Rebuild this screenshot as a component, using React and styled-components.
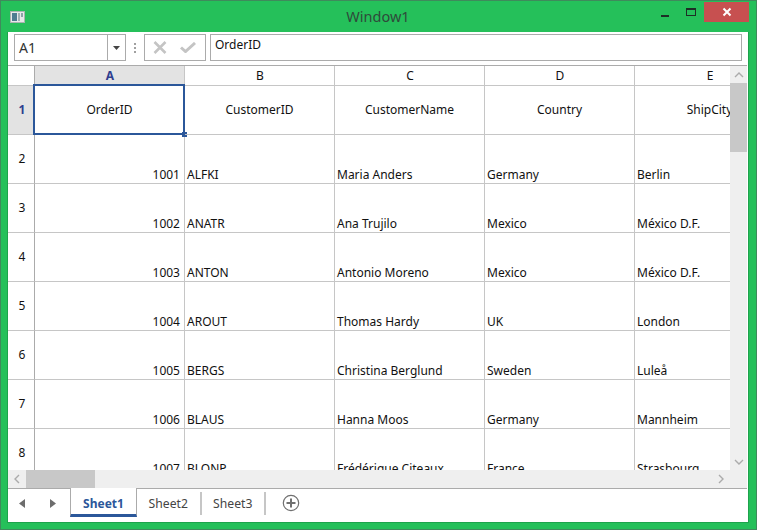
import React from 'react'
import styled, { createGlobalStyle } from 'styled-components'

const GlobalStyle = createGlobalStyle`
    html, body { margin: 0; padding: 0; background: #25c05a; }
    * { box-sizing: border-box; }
`

const columns = ['A', 'B', 'C', 'D', 'E']

const headerRow = ['OrderID', 'CustomerID', 'CustomerName', 'Country', 'ShipCity']

const rows = [
    ['1001', 'ALFKI', 'Maria Anders', 'Germany', 'Berlin'],
    ['1002', 'ANATR', 'Ana Trujilo', 'Mexico', 'México D.F.'],
    ['1003', 'ANTON', 'Antonio Moreno', 'Mexico', 'México D.F.'],
    ['1004', 'AROUT', 'Thomas Hardy', 'UK', 'London'],
    ['1005', 'BERGS', 'Christina Berglund', 'Sweden', 'Luleå'],
    ['1006', 'BLAUS', 'Hanna Moos', 'Germany', 'Mannheim'],
    ['1007', 'BLONP', 'Frédérique Citeaux', 'France', 'Strasbourg'],
]

const App = () => {
    return (
        <Window>
            <GlobalStyle />
            <TitleBar>
                <AppIcon>
                    <svg width="15" height="12" viewBox="0 0 15 12">
                        <rect x="0.5" y="0.5" width="14" height="11" fill="#e6e9e9" stroke="#a9b4b0" />
                        <rect x="2" y="2" width="5" height="8" fill="#4d7d90" />
                        <rect x="8" y="2" width="2" height="8" fill="#9fb2b4" />
                        <rect x="11" y="2" width="2" height="4" fill="#8ca3a6" />
                    </svg>
                </AppIcon>
                <Title>Window1</Title>
                <WindowButtons>
                    <MinButton><span /></MinButton>
                    <MaxButton><span /></MaxButton>
                    <CloseButton>
                        <svg width="10" height="10" viewBox="0 0 10 10">
                            <path d="M1.5 1.5L8.5 8.5M8.5 1.5L1.5 8.5" stroke="#fff" strokeWidth="2" />
                        </svg>
                    </CloseButton>
                </WindowButtons>
            </TitleBar>
            <Content>
                <FormulaBar>
                    <NameBox>
                        <NameText>A1</NameText>
                        <NameArrow>
                            <svg width="7" height="4" viewBox="0 0 7 4"><path d="M0 0H7L3.5 4Z" fill="#444" /></svg>
                        </NameArrow>
                    </NameBox>
                    <Grip>
                        <i /><i /><i />
                    </Grip>
                    <ActionBox>
                        <svg width="14" height="13" viewBox="0 0 14 13">
                            <path d="M1.5 1L12.5 12M12.5 1L1.5 12" stroke="#c4c4c4" strokeWidth="2.6" />
                        </svg>
                        <svg width="16" height="11" viewBox="0 0 16 11">
                            <path d="M1 5.5L5.5 9.5L15 1" fill="none" stroke="#c4c4c4" strokeWidth="3" />
                        </svg>
                    </ActionBox>
                    <FormulaInput>OrderID</FormulaInput>
                </FormulaBar>
                <SheetArea>
                    <GridView>
                        <HeaderLine>
                            <Corner />
                            {columns.map((col, i) => (
                                <ColumnHeader key={col} $active={i === 0}>{col}</ColumnHeader>
                            ))}
                        </HeaderLine>
                        <TitleLine>
                            <RowHeader $active>1</RowHeader>
                            {headerRow.map((text, i) => (
                                <TitleCell key={text} $selected={i === 0}>{text}</TitleCell>
                            ))}
                        </TitleLine>
                        {rows.map((row, r) => (
                            <DataLine key={row[0]}>
                                <RowHeader>{r + 2}</RowHeader>
                                {row.map((text, i) => (
                                    <DataCell key={i} $number={i === 0}>{text}</DataCell>
                                ))}
                            </DataLine>
                        ))}
                    </GridView>
                    <VerticalBar>
                        <BarArrow>
                            <svg width="10" height="6" viewBox="0 0 10 6"><path d="M1 5L5 1L9 5" fill="none" stroke="#ababab" strokeWidth="1.4" /></svg>
                        </BarArrow>
                        <VerticalThumb />
                        <BarSpacer />
                        <BarArrow>
                            <svg width="10" height="6" viewBox="0 0 10 6"><path d="M1 1L5 5L9 1" fill="none" stroke="#ababab" strokeWidth="1.4" /></svg>
                        </BarArrow>
                    </VerticalBar>
                    <HorizontalBar>
                        <BarArrowH>
                            <svg width="6" height="10" viewBox="0 0 6 10"><path d="M5 1L1 5L5 9" fill="none" stroke="#ababab" strokeWidth="1.4" /></svg>
                        </BarArrowH>
                        <HorizontalThumb />
                        <BarSpacer />
                        <BarArrowH>
                            <svg width="6" height="10" viewBox="0 0 6 10"><path d="M1 1L5 5L1 9" fill="none" stroke="#ababab" strokeWidth="1.4" /></svg>
                        </BarArrowH>
                    </HorizontalBar>
                    <BarCorner />
                </SheetArea>
                <TabBar>
                    <TabNav>
                        <svg width="6" height="9" viewBox="0 0 6 9"><path d="M6 0V9L0 4.5Z" fill="#6d6d6d" /></svg>
                        <svg width="6" height="9" viewBox="0 0 6 9"><path d="M0 0V9L6 4.5Z" fill="#6d6d6d" /></svg>
                    </TabNav>
                    <ActiveTab>Sheet1</ActiveTab>
                    <Tab>Sheet2</Tab>
                    <Tab>Sheet3</Tab>
                    <AddSheet>
                        <svg width="18" height="18" viewBox="0 0 18 18">
                            <circle cx="9" cy="9" r="7.7" fill="none" stroke="#707070" strokeWidth="1.2" />
                            <path d="M9 4.5V13.5M4.5 9H13.5" stroke="#707070" strokeWidth="2" />
                        </svg>
                    </AddSheet>
                </TabBar>
            </Content>
        </Window>
    )
}

const Window = styled.div`
    width: 757px;
    height: 530px;
    background-color: #25c05a;
    border: 1px solid #3f8a5c;
    padding: 0 7px 6px 6px;
    display: flex;
    flex-direction: column;
    font-family: "Noto Sans", "Open Sans", sans-serif;
    overflow: hidden;
`
const TitleBar = styled.div`
    height: 31px;
    flex: none;
    display: flex;
    align-items: flex-start;
    position: relative;
`
const AppIcon = styled.div`
    margin: 10px 0 0 3px;
    line-height: 0;
`
const Title = styled.div`
    position: absolute;
    left: 0;
    right: 0;
    top: 5px;
    text-align: center;
    font-size: 14.5px;
    line-height: 20px;
    color: #2f4a3a;
`
const WindowButtons = styled.div`
    margin-left: auto;
    display: flex;
    position: relative;
`
const MinButton = styled.div`
    width: 27px;
    height: 21px;
    display: flex;
    justify-content: center;
    span {
        display: block;
        width: 8px;
        height: 2px;
        margin-top: 14px;
        background-color: #1d2f26;
    }
`
const MaxButton = styled.div`
    width: 26px;
    height: 21px;
    display: flex;
    justify-content: center;
    span {
        display: block;
        width: 10px;
        height: 8px;
        margin-top: 7px;
        border: 1px solid #1d2f26;
        border-top-width: 2px;
    }
`
const CloseButton = styled.div`
    width: 45px;
    height: 20px;
    margin-top: 1px;
    background-color: #c75050;
    display: flex;
    align-items: center;
    justify-content: center;
`
const Content = styled.div`
    flex: 1;
    min-height: 0;
    background-color: #fff;
    border: 1px solid #1ea34c;
    border-top: 0;
    display: flex;
    flex-direction: column;
`
const FormulaBar = styled.div`
    height: 33px;
    flex: none;
    padding: 2px 6px 4px 6px;
    display: flex;
    align-items: stretch;
`
const NameBox = styled.div`
    width: 112px;
    border: 1px solid #ababab;
    display: flex;
`
const NameText = styled.div`
    flex: 1;
    padding-left: 4px;
    font-size: 14px;
    line-height: 25px;
    color: #333;
`
const NameArrow = styled.div`
    width: 18px;
    border-left: 1px solid #ababab;
    display: flex;
    align-items: center;
    justify-content: center;
`
const Grip = styled.div`
    width: 18px;
    display: flex;
    flex-direction: column;
    align-items: center;
    justify-content: center;
    gap: 2px;
    i {
        display: block;
        width: 2px;
        height: 2px;
        background-color: #a0a0a0;
    }
`
const ActionBox = styled.div`
    width: 62px;
    border: 1px solid #ababab;
    display: flex;
    align-items: center;
    justify-content: center;
    gap: 13px;
    padding-right: 1px;
`
const FormulaInput = styled.div`
    flex: 1;
    margin-left: 4px;
    border: 1px solid #ababab;
    padding-left: 4px;
    font-size: 12px;
    line-height: 20px;
    color: #111;
`
const SheetArea = styled.div`
    flex: 1;
    min-height: 0;
    margin-right: 1px;
    border-top: 1px solid #ababab;
    border-bottom: 1px solid #ababab;
    display: grid;
    grid-template-columns: 1fr 17px;
    grid-template-rows: 1fr 18px;
`
const GridView = styled.div`
    overflow: hidden;
    min-width: 0;
    min-height: 0;
`
const Line = styled.div`
    display: grid;
    grid-template-columns: 27px repeat(5, 150px);
    width: 777px;
`
const HeaderLine = styled(Line)`
    height: 20px;
`
const TitleLine = styled(Line)`
    height: 49px;
`
const DataLine = styled(Line)`
    height: 49px;
`
const Corner = styled.div`
    border-right: 1px solid #ababab;
    border-bottom: 1px solid #c6c6c6;
`
const ColumnHeader = styled.div`
    background-color: ${props => props.$active ? '#e3e3e3' : '#fff'};
    color: ${props => props.$active ? '#2f3e8f' : '#111'};
    font-weight: ${props => props.$active ? 700 : 400};
    border-right: 1px solid #c6c6c6;
    border-bottom: 1px solid ${props => props.$active ? '#2b579a' : '#c6c6c6'};
    padding-left: 1px;
    text-align: center;
    font-size: 12px;
    line-height: 19px;
`
const RowHeader = styled.div`
    background-color: ${props => props.$active ? '#e3e3e3' : '#fff'};
    color: ${props => props.$active ? '#2f3e8f' : '#111'};
    font-weight: ${props => props.$active ? 700 : 400};
    border-right: 1px solid #ababab;
    border-bottom: 1px solid #c6c6c6;
    display: flex;
    align-items: center;
    justify-content: center;
    padding: 0 0 2px 2px;
    font-size: 12px;
`
const TitleCell = styled.div`
    position: relative;
    border-right: 1px solid #c6c6c6;
    border-bottom: 1px solid #c6c6c6;
    display: flex;
    align-items: center;
    justify-content: center;
    padding-bottom: 2px;
    font-size: 12px;
    color: #111;
    white-space: nowrap;
    ${props => props.$selected && `
        &::before {
            content: "";
            position: absolute;
            inset: -2px -1px -1px -2px;
            border: 2px solid #2b579a;
        }
        &::after {
            content: "";
            position: absolute;
            right: -3px;
            bottom: -3px;
            width: 5px;
            height: 5px;
            background-color: #2b579a;
        }
    `}
`
const DataCell = styled.div`
    border-right: 1px solid #c6c6c6;
    border-bottom: 1px solid #c6c6c6;
    display: flex;
    align-items: flex-end;
    justify-content: ${props => props.$number ? 'flex-end' : 'flex-start'};
    padding: 0 4px 0 2px;
    font-size: 12px;
    line-height: 17px;
    color: #111;
    white-space: nowrap;
`
const VerticalBar = styled.div`
    background-color: #efefef;
    display: flex;
    flex-direction: column;
`
const HorizontalBar = styled.div`
    background-color: #efefef;
    display: flex;
`
const BarCorner = styled.div`
    background-color: #efefef;
`
const BarArrow = styled.div`
    height: 17px;
    flex: none;
    display: flex;
    align-items: center;
    justify-content: center;
`
const BarArrowH = styled.div`
    width: 18px;
    flex: none;
    display: flex;
    align-items: center;
    justify-content: center;
`
const BarSpacer = styled.div`
    flex: 1;
`
const VerticalThumb = styled.div`
    height: 69px;
    background-color: #c8c8c8;
`
const HorizontalThumb = styled.div`
    width: 69px;
    background-color: #c8c8c8;
`
const TabBar = styled.div`
    height: 33px;
    flex: none;
    display: flex;
    align-items: flex-start;
`
const TabNav = styled.div`
    width: 62px;
    height: 28px;
    padding: 0 14px 0 11px;
    display: flex;
    align-items: center;
    justify-content: space-between;
`
const ActiveTab = styled.div`
    height: 29px;
    margin-top: -1px;
    width: 67px;
    border-left: 1px solid #ababab;
    border-right: 1px solid #ababab;
    border-bottom: 3px solid #2b579a;
    background-color: #fff;
    color: #2b579a;
    font-size: 12px;
    font-weight: 700;
    line-height: 31px;
    text-align: center;
`
const Tab = styled.div`
    height: 23px;
    margin-top: 3px;
    width: 64.5px;
    border-right: 2px solid #c6c6c6;
    color: #444;
    font-size: 12.2px;
    line-height: 23px;
    text-align: center;
`
const AddSheet = styled.div`
    margin: 5px 0 0 16px;
    line-height: 0;
`

export default App
